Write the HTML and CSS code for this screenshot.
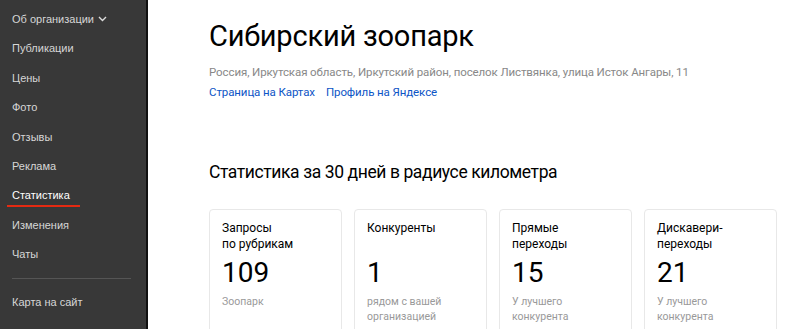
FILE: index.html
```html
<!DOCTYPE html>
<html lang="ru">
<head>
    <meta charset="UTF-8">
    <meta name="viewport" content="width=device-width, initial-scale=1.0">
    <title>Сибирский зоопарк</title>
    <link rel="stylesheet" href="styles.css">
</head>
<body>
    <div class="layout">
        <nav class="sidebar">
            <div class="nav-item">Об организации
                <svg class="chevron" width="9" height="6" viewBox="0 0 9 6"><path d="M1 1l3.5 3.5L8 1" fill="none" stroke="#ddd" stroke-width="1.4"/></svg>
            </div>
            <div class="nav-item">Публикации</div>
            <div class="nav-item">Цены</div>
            <div class="nav-item">Фото</div>
            <div class="nav-item">Отзывы</div>
            <div class="nav-item">Реклама</div>
            <div class="nav-item active"><span>Статистика</span></div>
            <div class="nav-item">Изменения</div>
            <div class="nav-item">Чаты</div>
            <div class="nav-divider"></div>
            <div class="nav-item">Карта на сайт</div>
        </nav>

        <main class="content">
            <h1 class="title">Сибирский зоопарк</h1>
            <div class="address">Россия, Иркутская область, Иркутский район, поселок Листвянка, улица Исток Ангары, 11</div>
            <div class="links">
                <a href="#">Страница на Картах</a>
                <a href="#">Профиль на Яндексе</a>
            </div>

            <h2 class="stats-heading">Статистика за 30 дней в радиусе километра</h2>

            <div class="cards">
                <div class="card">
                    <div class="card-title">Запросы<br>по рубрикам</div>
                    <div class="card-value">109</div>
                    <div class="card-note">Зоопарк</div>
                </div>
                <div class="card">
                    <div class="card-title">Конкуренты</div>
                    <div class="card-value">1</div>
                    <div class="card-note">рядом с вашей<br>организацией</div>
                </div>
                <div class="card">
                    <div class="card-title">Прямые<br>переходы</div>
                    <div class="card-value">15</div>
                    <div class="card-note">У лучшего<br>конкурента</div>
                </div>
                <div class="card">
                    <div class="card-title">Дискавери-<br>переходы</div>
                    <div class="card-value">21</div>
                    <div class="card-note">У лучшего<br>конкурента</div>
                </div>
            </div>
        </main>
    </div>
</body>
</html>
```

FILE: styles.css
```css
/* General */
body {
    margin: 0;
    font-family: Roboto, 'Liberation Sans', sans-serif;
    color: #000;
    background: #fff;
    overflow: hidden;
}

.layout {
    display: flex;
    min-height: 100vh;
}

/* Sidebar */
.sidebar {
    width: 146px;
    flex-shrink: 0;
    background-color: #383838;
    border-right: 2px solid #111;
    padding-top: 5px;
    font-family: 'Liberation Sans', Arial, sans-serif;
}

.nav-item {
    padding-left: 12px;
    line-height: 29.4px;
    font-size: 11px;
    color: #d6d6d6;
}

.chevron {
    margin-left: 1px;
    vertical-align: 1px;
}

.nav-item.active span {
    position: relative;
    color: #fff;
}

.nav-item.active span::after {
    content: '';
    position: absolute;
    left: -5px;
    right: -10px;
    bottom: -6px;
    height: 2px;
    background-color: #e52a12;
}

.nav-divider {
    height: 1px;
    margin: 8px 15px 9px 12px;
    background-color: #555;
}

/* Content */
.content {
    flex: 1;
    padding: 16px 0 0 61px;
}

.title {
    margin: 0;
    font-size: 29px;
    font-weight: 400;
    line-height: 40px;
    letter-spacing: -0.2px;
}

.address {
    margin-top: 8px;
    font-size: 11.5px;
    line-height: 16px;
    letter-spacing: -0.1px;
    color: #888;
}

.links {
    display: flex;
    gap: 11px;
    margin-top: 4px;
    font-size: 11.5px;
    line-height: 16px;
    letter-spacing: -0.1px;
}

.links a {
    color: #0d55c6;
    text-decoration: none;
}

.stats-heading {
    margin: 59px 0 0;
    font-size: 17.5px;
    font-weight: 400;
    line-height: 26px;
    letter-spacing: -0.4px;
}

/* Cards */
.cards {
    display: flex;
    gap: 12px;
    margin-top: 24px;
}

.card {
    width: 107px;
    height: 140px;
    padding: 10px 12px 0;
    border: 1px solid #e8e8e8;
    border-radius: 4px;
}

.card-title {
    height: 32px;
    font-size: 12px;
    line-height: 16px;
}

.card-value {
    margin-top: 5px;
    font-size: 28px;
    line-height: 32px;
}

.card-note {
    margin-top: 5px;
    font-size: 10.5px;
    line-height: 15px;
    color: #999;
}
```
